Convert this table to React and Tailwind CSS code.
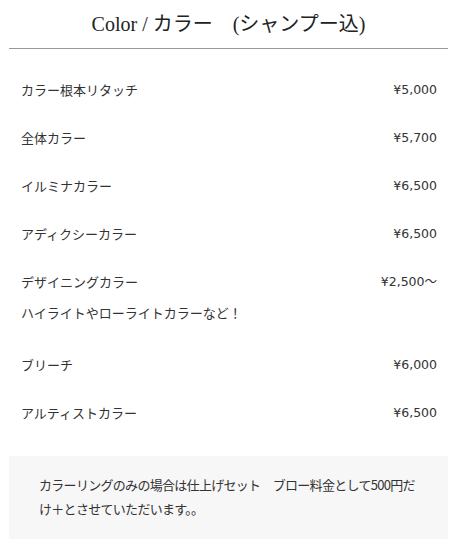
const items = [
  { name: 'カラー根本リタッチ', price: '¥5,000' },
  { name: '全体カラー', price: '¥5,700' },
  { name: 'イルミナカラー', price: '¥6,500' },
  { name: 'アディクシーカラー', price: '¥6,500' },
  { name: 'デザイニングカラー', price: '¥2,500〜', note: 'ハイライトやローライトカラーなど！' },
  { name: 'ブリーチ', price: '¥6,000' },
  { name: 'アルティストカラー', price: '¥6,500' },
];

export default function App() {
  return (
    <div className="w-[463px] min-h-[556px] bg-white text-[#333] font-['Noto_Sans_CJK_JP',sans-serif]">
      <div className="ml-[9px] mr-[15px] h-[49px] border-b border-[#999] flex items-center justify-center">
        <h2 className="text-[20px] leading-none text-[#222] font-['Liberation_Serif','Noto_Sans_CJK_JP',serif] pb-[1px]">
          Color / カラー　(シャンプー込)
        </h2>
      </div>

      <ul className="mt-[17px] pl-[21px] pr-[26px]">
        {items.map((item) => (
          <li key={item.name} className="py-3 text-[13px] leading-6">
            <div className="flex justify-between">
              <span>{item.name}</span>
              <span className="font-['DejaVu_Sans','Noto_Sans_CJK_JP',sans-serif] text-[12.5px]">{item.price}</span>
            </div>
            {item.note && <p className="mt-[7px] mb-1">{item.note}</p>}
          </li>
        ))}
      </ul>

      <div className="ml-[9px] mr-[15px] mt-[19px] bg-[#f7f7f7] pl-[30px] pr-[28px] pt-[17px] pb-[18px] text-[13px] leading-6 tracking-[-0.7px]">
        カラーリングのみの場合は仕上げセット　ブロー料金として500円だけ＋とさせていただいます。。
      </div>
    </div>
  );
}
